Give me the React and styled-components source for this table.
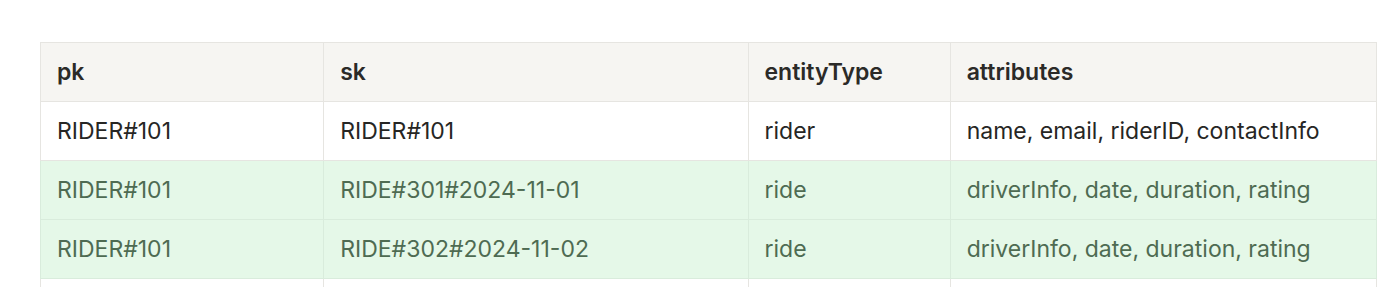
import React from "react";
import styled, { createGlobalStyle } from "styled-components";

const GlobalStyle = createGlobalStyle`
  html, body { margin: 0; padding: 0; background: #ffffff; }
  body { font-family: Inter, "Noto Sans", "Liberation Sans", sans-serif; }
`;

const Page = styled.div`
  padding: 42px 23px 0 40px;
`;

const Table = styled.table`
  width: 100%;
  border-collapse: collapse;
  table-layout: fixed;
  border: 1.5px solid #e6e5e1;
  font-size: 23px;
  line-height: 31px;
`;

const HeadCell = styled.th`
  text-align: left;
  font-weight: 600;
  color: #2b2a28;
  background: #f6f5f2;
  padding: 14px 16px 13px;
  border: 1.5px solid #e6e5e1;
`;

const Row = styled.tr`
  background: ${(p) => (p.$highlight ? "#e5f8e8" : "#ffffff")};
`;

const Cell = styled.td`
  padding: 14px 16px 13px;
  color: ${(p) => (p.$highlight ? "#4e6b52" : "#262624")};
  border: 1.5px solid ${(p) => (p.$highlight ? "#d9ecdc" : "#e6e5e1")};
  white-space: nowrap;
  height: 31px;
`;

const columns = [
  { key: "pk", width: 283 },
  { key: "sk", width: 424 },
  { key: "entityType", width: 202 },
  { key: "attributes", width: 426 },
];

const rows = [
  { pk: "RIDER#101", sk: "RIDER#101", entityType: "rider", attributes: "name, email, riderID, contactInfo", highlight: false },
  { pk: "RIDER#101", sk: "RIDE#301#2024-11-01", entityType: "ride", attributes: "driverInfo, date, duration, rating", highlight: true },
  { pk: "RIDER#101", sk: "RIDE#302#2024-11-02", entityType: "ride", attributes: "driverInfo, date, duration, rating", highlight: true },
  { pk: "", sk: "", entityType: "", attributes: "", highlight: false },
];

export default function App() {
  return (
    <Page>
      <GlobalStyle />
      <Table>
        <colgroup>
          {columns.map((c) => (
            <col key={c.key} style={{ width: c.width }} />
          ))}
        </colgroup>
        <thead>
          <tr>
            {columns.map((c) => (
              <HeadCell key={c.key}>{c.key}</HeadCell>
            ))}
          </tr>
        </thead>
        <tbody>
          {rows.map((r, i) => (
            <Row key={i} $highlight={r.highlight}>
              {columns.map((c) => (
                <Cell key={c.key} $highlight={r.highlight}>
                  {r[c.key]}
                </Cell>
              ))}
            </Row>
          ))}
        </tbody>
      </Table>
    </Page>
  );
}
